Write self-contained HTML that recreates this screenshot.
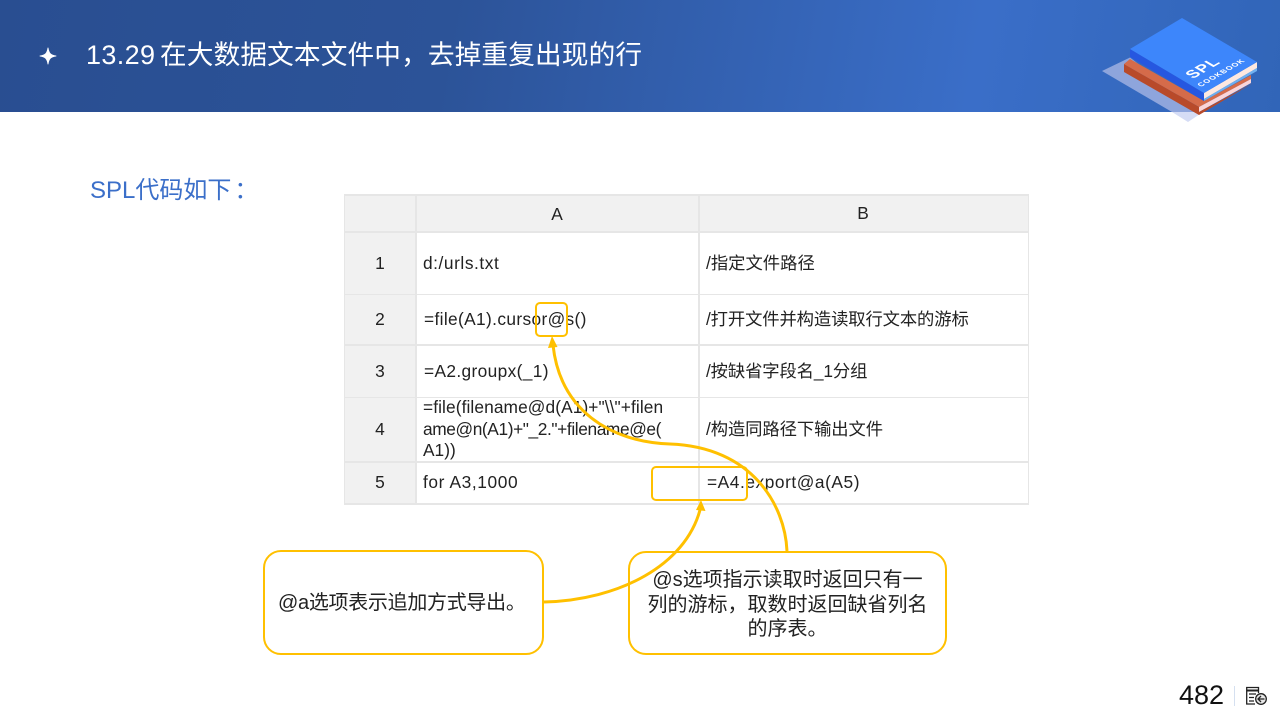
<!DOCTYPE html>
<html lang="zh"><head><meta charset="utf-8"><title>13.29</title>
<style>
html,body{margin:0;padding:0;background:#fff}
#p{position:relative;width:1280px;height:720px;overflow:hidden;background:#fff;font-family:"Liberation Sans","Noto Sans CJK SC",sans-serif;color:#222}
#h{position:absolute;left:0;top:0;width:1280px;height:112px;background:linear-gradient(100deg,#294e91 0%,#2c5398 35%,#3a6ec8 76%,#3165b8 100%)}
.t{position:absolute;white-space:nowrap;font-size:17.33px;line-height:24px}
.c{position:absolute;text-align:center}
.g{position:absolute;background:#f1f1f1}
.l{position:absolute;background:#e6e6e6}
svg{position:absolute;left:0;top:0}
</style></head><body><div id="p">
<div id="h"></div>
<svg width="1280" height="720" viewBox="0 0 1280 720" style="z-index:1">
<path d="M48 47.700C48.900 53.500 50.500 55.100 56.300 56C50.500 56.900 48.900 58.500 48 64.300C47.100 58.500 45.500 56.900 39.700 56C45.500 55.100 47.100 53.500 48 47.700Z" fill="#fff" stroke="#fff" stroke-width=".8"/>
<polygon points="1102,71 1130,57.500 1200,112 1172,112" fill="#8ea5dc"/>
<polygon points="1172,112 1200,112 1200,114 1188,122" fill="#d5dcf5"/>
<polygon points="1124,64 1130,59 1204,101 1251,75 1251,79 1199,107" fill="#d56b4a"/>
<polygon points="1124,64 1199,107 1199,115 1124,72" fill="#b84a2a"/>
<polygon points="1199,107 1251,79 1251,83 1199,112" fill="#fbd5d8"/>
<polygon points="1199,112 1253,83 1199,115" fill="#b84a2a"/>
<polygon points="1130,49 1204,93 1204,101 1130,57" fill="#2657e0"/>
<polygon points="1204,93 1257,62 1257,68 1204,99" fill="#fde8e0"/>
<polygon points="1204,99 1257,68 1257,71 1204,101" fill="#6fb0f0"/>
<polygon points="1182,18 1257,62 1204,93 1130,49" fill="#3d86fb"/>
<text transform="matrix(.86,-.5,.86,.5,1193,79)" font-family="Liberation Sans" font-weight="700" font-size="15.500" letter-spacing="1" fill="#fff">SPL</text>
<text transform="matrix(.86,-.5,.86,.5,1201,87)" font-family="Liberation Sans" font-weight="700" font-size="7.500" letter-spacing=".9" fill="#fff">COOKBOOK</text>
</svg>
<div class="t" style="left:86px;top:35px;font-size:27px;line-height:40px;color:#fff;z-index:2;letter-spacing:.35px">13.29</div>
<div class="t" style="left:160px;top:35px;font-size:26.67px;line-height:40px;color:#fff;z-index:2;letter-spacing:.13px">在大数据文本文件中，去掉重复出现的行</div>
<div class="t" style="left:90px;top:173px;font-size:24px;line-height:36px;color:#3b6fc9">SPL代码如下<span style="margin-left:3px">：</span></div>

<div class="g" style="left:344px;top:194px;width:684px;height:38px"></div>
<div class="g" style="left:344px;top:232px;width:72px;height:272px"></div>
<div class="l" style="left:344px;top:194px;width:685px;height:2px"></div>
<div class="l" style="left:344px;top:231px;width:685px;height:2px"></div>
<div class="l" style="left:344px;top:294px;width:685px;height:1px"></div>
<div class="l" style="left:344px;top:344px;width:685px;height:2px"></div>
<div class="l" style="left:344px;top:397px;width:685px;height:1px"></div>
<div class="l" style="left:344px;top:461px;width:685px;height:2px"></div>
<div class="l" style="left:344px;top:503px;width:685px;height:2px"></div>
<div class="l" style="left:344px;top:194px;width:1px;height:311px"></div>
<div class="l" style="left:415px;top:194px;width:2px;height:311px"></div>
<div class="l" style="left:698px;top:194px;width:2px;height:311px"></div>
<div class="l" style="left:1028px;top:194px;width:1px;height:311px"></div>

<div class="t c" style="left:416px;width:282px;top:202px">A</div>
<div class="t c" style="left:699px;width:328px;top:201px">B</div>
<div class="t c" style="left:344px;width:72px;top:251px">1</div>
<div class="t c" style="left:344px;width:72px;top:307px">2</div>
<div class="t c" style="left:344px;width:72px;top:359px">3</div>
<div class="t c" style="left:344px;width:72px;top:417px">4</div>
<div class="t c" style="left:344px;width:72px;top:470px">5</div>

<div class="t" style="left:423px;top:251px;letter-spacing:.55px">d:/urls.txt</div>
<div class="t" style="left:424px;top:307px;letter-spacing:.35px">=file(A1).cursor@s()</div>
<div class="t" style="left:424px;top:359px;letter-spacing:.35px">=A2.groupx(_1)</div>
<div class="t" style="left:423px;top:397px;line-height:21.7px"><span style="letter-spacing:.09px">=file(filename@d(A1)+"\\"+filen</span><br><span style="letter-spacing:-.4px">ame@n(A1)+"_2."+filename@e(</span><br>A1))</div>
<div class="t" style="left:423px;top:470px;letter-spacing:.6px">for A3,1000</div>
<div class="t" style="left:706px;top:251px">/指定文件路径</div>
<div class="t" style="left:706px;top:307px;letter-spacing:-.13px">/打开文件并构造读取行文本的游标</div>
<div class="t" style="left:706px;top:359px;letter-spacing:-.13px">/按缺省字段名_1分组</div>
<div class="t" style="left:706px;top:417px;letter-spacing:-.1px">/构造同路径下输出文件</div>
<div class="t" style="left:707px;top:470px;letter-spacing:.55px">=A4.export@a(A5)</div>

<div style="position:absolute;left:263px;top:550px;width:277px;height:101px;border:2px solid #ffc000;border-radius:18px;background:#fff"></div>
<div style="position:absolute;left:628px;top:551px;width:315px;height:100px;border:2px solid #ffc000;border-radius:18px;background:#fff"></div>
<div class="t" style="left:278px;top:591px;font-size:20px;letter-spacing:-.3px">@a选项表示追加方式导出。</div>
<div class="t" style="left:628px;width:319px;top:568px;font-size:20px;line-height:24.5px;text-align:center">@s选项指示读取时返回只有一<br>列的游标，取数时返回缺省列名<br>的序表。</div>

<svg width="1280" height="720" viewBox="0 0 1280 720" style="z-index:3" fill="none">
<rect x="536" y="303" width="31" height="33" rx="4" stroke="#ffc000" stroke-width="2"/>
<rect x="652" y="467" width="95" height="33" rx="4" stroke="#ffc000" stroke-width="2"/>
<path d="M787 551C785 505 752 447 670 444C610 442 560 410 553 345" stroke="#ffc000" stroke-width="3"/>
<polygon points="552,336 557.500,347 548,348" fill="#ffc000"/>
<path d="M544 602C620 600 685 565 700 510" stroke="#ffc000" stroke-width="3"/>
<polygon points="701,500 705.500,511 696,510" fill="#ffc000"/>
<rect x="1234" y="686" width="1" height="20" fill="#d5e0f0"/>
<g stroke="#222" stroke-width="1.300">
<path d="M1255 704H1246.700V687.500H1258.500V693"/>
<path d="M1247 690.500H1258" stroke-width="2"/>
<path d="M1249 694H1256M1249 697.500H1254M1249 701H1254"/>
<circle cx="1261" cy="699" r="5.300" fill="#e8e8e8"/>
<path d="M1264.500 699H1258M1261 696L1258 699L1261 702"/>
</g>
</svg>
<div class="t" style="left:1179px;top:675px;font-size:27px;line-height:40px;color:#111">482</div>
</div></body></html>
